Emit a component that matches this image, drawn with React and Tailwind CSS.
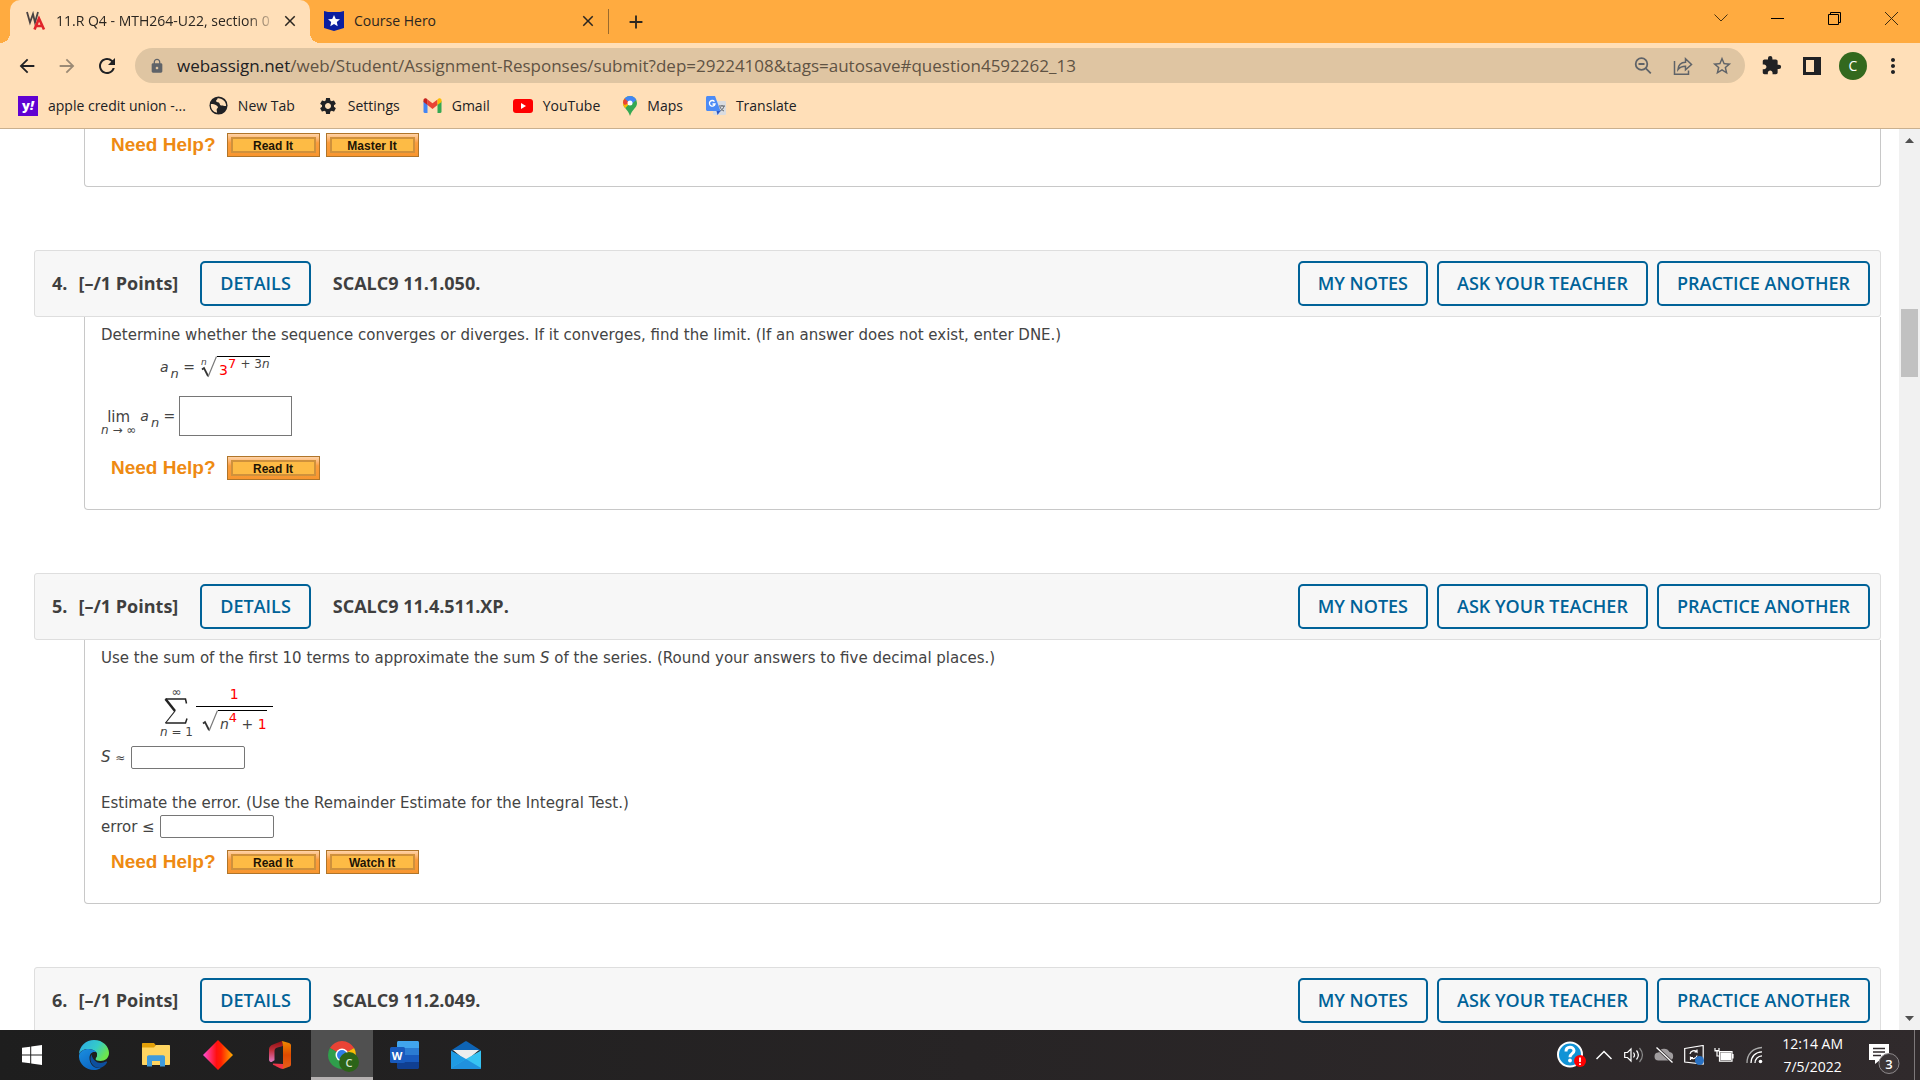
import {
  MdArrowBack,
  MdArrowForward,
  MdClose,
  MdExtension,
  MdLock,
  MdMoreVert,
  MdAdd,
  MdRefresh,
  MdSettings,
  MdStarBorder,
} from "react-icons/md";

const uiFont = "font-['Open_Sans','Noto_Sans',sans-serif]";
const mathFont = "font-['DejaVu_Sans',Verdana,sans-serif]";
const outlineBtnCls =
  "h-[45px] rounded-[5px] border-2 border-[#006298] bg-[#f7f7f7] px-[18px] text-[18px] font-semibold text-[#006298] hover:bg-white";
const answerCls = "h-[23px] w-[114px] rounded-[2px] border border-[#767676] bg-white px-1 focus:outline-none";
const subCls = "bottom-0 ml-0.5 align-[-6px] text-[13px]";
const supCls = "top-0 align-[7px] text-[13px]";

/* ---------- browser chrome ---------- */

function WebAssignIcon() {
  return (
    <svg className="size-5" viewBox="0 0 20 20" fill="none" aria-hidden>
      <path d="M1 1l3 10.500L7 3l2 8.500L12 1" stroke="#4a4242" strokeWidth="1.800" />
      <path d="M8.500 18.500l4.500-11 5 11M10.500 15h6" stroke="#e0252b" strokeWidth="2.600" />
    </svg>
  );
}

function CourseHeroIcon() {
  return (
    <svg className="size-5" viewBox="0 0 20 20" aria-hidden>
      <path d="M0 0l4 1h12l4-1v17l-10 3-10-3z" fill="#0b1fa0" />
      <path d="M10 4l1.800 3.900 4.200.4-3.200 2.800.9 4.200L10 13.100l-3.700 2.200.9-4.200L4 8.300l4.200-.4z" fill="#fff" />
    </svg>
  );
}

function TabStrip() {
  return (
    <div className="flex h-[43px] items-stretch bg-[#ffab40] pl-[10px] text-[14px] text-[#2b2620]">
      <div className="relative flex w-[300px] items-center rounded-t-[10px] bg-[#ffdfb8] pr-[11px] pb-0.5 pl-4">
        <span className="absolute bottom-0 -left-[10px] size-[10px] bg-[radial-gradient(circle_at_0_0,transparent_10px,#ffdfb8_10px)]" />
        <span className="absolute -right-[10px] bottom-0 size-[10px] bg-[radial-gradient(circle_at_100%_0,transparent_10px,#ffdfb8_10px)]" />
        <WebAssignIcon />
        <span className="ml-[10px] grow whitespace-nowrap [mask-image:linear-gradient(to_right,#000_190px,transparent_222px)]">
          11.R Q4 - MTH264-U22, section 0
        </span>
        <button aria-label="Close tab">
          <MdClose className="size-[18px]" />
        </button>
      </div>
      <div className="flex w-[298px] items-center pr-[11px] pb-0.5 pl-[14px]">
        <CourseHeroIcon />
        <span className="ml-[10px] grow">Course Hero</span>
        <button aria-label="Close tab">
          <MdClose className="size-[18px]" />
        </button>
      </div>
      <div className="my-[9px] w-px bg-[#9a6a2c]" />
      <button aria-label="New tab" className="ml-4">
        <MdAdd className="size-[22px]" />
      </button>
      <div className="ml-auto flex">
        <button aria-label="Search tabs" className="grid w-[57px] place-items-center pb-2">
          <svg width="14" height="8" viewBox="0 0 14 8" fill="none" stroke="#4a3413" aria-hidden>
            <path d="M.5.5L7 7l6.500-6.500" />
          </svg>
        </button>
        <button aria-label="Minimize" className="grid w-[57px] place-items-center">
          <svg width="13" height="13" viewBox="0 0 13 13" aria-hidden>
            <path d="M0 3.500h13" stroke="#000" />
          </svg>
        </button>
        <button aria-label="Restore" className="grid w-[57px] place-items-center pb-[6px]">
          <svg width="13" height="13" viewBox="0 0 13 13" fill="none" stroke="#000" aria-hidden>
            <path d="M.5 2.500h10v10H.5zM2.500 2.500v-2h10v10h-2" />
          </svg>
        </button>
        <button aria-label="Close" className="grid w-[57px] place-items-center pb-[6px]">
          <svg width="13" height="13" viewBox="0 0 13 13" stroke="#3a2a10" aria-hidden>
            <path d="M0 0l13 13M13 0L0 13" />
          </svg>
        </button>
      </div>
    </div>
  );
}

function AddressBar() {
  return (
    <div className="flex h-[45px] items-center pr-[15px] pl-4 text-[#202124]">
      <button aria-label="Back">
        <MdArrowBack className="size-[22px]" />
      </button>
      <button aria-label="Forward" className="ml-[18px] text-[#9b8a75]">
        <MdArrowForward className="size-[22px]" />
      </button>
      <button aria-label="Reload" className="ml-[17px]">
        <MdRefresh className="size-6" />
      </button>
      <div className="ml-4 flex h-[35px] grow items-center rounded-full bg-[#dfc5a2] pr-3 pl-[14px] text-[#5f6368]">
        <MdLock className="size-4" />
        <p className="ml-3 grow text-[17px] whitespace-nowrap text-[#5f5344]">
          <span className="text-[#202124]">webassign.net</span>
          /web/Student/Assignment-Responses/submit?dep=29224108&amp;tags=autosave#question4592262_13
        </p>
        <button aria-label="Zoom">
          <svg className="size-[18px]" viewBox="0 0 18 18" fill="none" stroke="currentColor" strokeWidth="1.800" aria-hidden>
            <circle cx="7.500" cy="7" r="5.800" />
            <path d="M4.500 7h6M11.800 11.300l5 5" />
          </svg>
        </button>
        <button aria-label="Share" className="ml-[21px]">
          <svg className="size-5" viewBox="0 0 20 20" fill="none" stroke="currentColor" strokeWidth="1.500" aria-hidden>
            <path d="M1.500 5v13.200h14V14.500" />
            <path d="M5 13.500c.3-4.500 3-7 7.500-7.200V2.800l6 5.700-6 5.300v-3.500c-3.500 0-5.700.7-7.500 3.200z" />
          </svg>
        </button>
        <button aria-label="Bookmark" className="ml-[18px]">
          <MdStarBorder className="size-[22px]" />
        </button>
      </div>
      <button aria-label="Extensions" className="ml-4">
        <MdExtension className="size-[21px]" />
      </button>
      <button aria-label="Side panel" className="ml-[21px]">
        <svg className="size-[18px]" viewBox="0 0 18 18" aria-hidden>
          <path d="M0 0h18v18H0zM3 3v12h8V3z" fill="currentColor" fillRule="evenodd" />
        </svg>
      </button>
      <button aria-label="Profile" className="ml-[18px] grid size-7 place-items-center rounded-full bg-[#33691e] text-[14px] text-white">
        C
      </button>
      <button aria-label="Menu" className="ml-[14px]">
        <MdMoreVert className="size-6" />
      </button>
    </div>
  );
}

function YahooIcon() {
  return (
    <span className="grid size-5 place-items-center bg-[#6001d2] text-[13px] leading-none font-extrabold text-white">
      <span>
        y<i>!</i>
      </span>
    </span>
  );
}

function GlobeIcon() {
  return (
    <svg className="size-[19px]" viewBox="0 0 20 20" aria-hidden>
      <circle cx="10" cy="10" r="9.500" fill="#202124" />
      <path d="M2 8.500c2.500 0 4 .5 6 1.500 1.500.8 2 2.500.5 3.200-1 .8 0 2.500 0 4.500C4 17 1.500 13 2 8.500z" fill="#ffdfb8" />
      <path d="M9 2.300c.2 1.700-2 1.700-1.500 3.200.6 1.500 3 .5 3.500 2 .4 1.300 1 2.500 2.500 2.500 1.800 0 2.200 1 4.500.5.300-4.500-4-8.700-9-8.200z" fill="#ffdfb8" />
    </svg>
  );
}

function GmailIcon() {
  return (
    <svg className="h-[15px] w-[19px]" viewBox="0 0 18 15" aria-hidden>
      <path d="M0 3v10.800C0 14.500.5 15 1.200 15H4V6z" fill="#4285f4" />
      <path d="M18 3v10.800c0 .7-.5 1.200-1.200 1.200H14V6z" fill="#34a853" />
      <path d="M4 1.500v5.600l5 3.900 5-3.900V1.500L9 5.300z" fill="#ea4335" />
      <path d="M0 2.200v1.900l4 3V1.500L3.200.8C1.800-.3 0 .6 0 2.200z" fill="#c5221f" />
      <path d="M18 2.200v1.900l-4 3V1.500l.8-.7C16.200-.3 18 .6 18 2.200z" fill="#fbbc04" />
    </svg>
  );
}

function YouTubeIcon() {
  return (
    <svg className="h-[14px] w-5" viewBox="0 0 20 14" aria-hidden>
      <rect width="20" height="14" rx="3" fill="#f00" />
      <path d="M8 4l5 3-5 3z" fill="#fff" />
    </svg>
  );
}

function MapsIcon() {
  return (
    <svg className="h-5 w-[14px]" viewBox="0 0 14 20" aria-hidden>
      <path d="M0 7a7 7 0 0114 0c0 5-5 6-7 13C5 13 0 12 0 7z" fill="#34a853" />
      <path d="M0 7c0-2 .7-3.400 1.700-4.600L7 7l-4.800 5.200C.9 10.700 0 9.500 0 7z" fill="#fbbc04" />
      <path d="M1.700 2.400L7 7l-5.500 2L0 7c0-2 .7-3.400 1.700-4.600z" fill="#ea4335" />
      <path d="M1.700 2.400A7 7 0 0113.300 4L8 8.500z" fill="#4285f4" />
      <circle cx="7" cy="7" r="2.500" fill="#fff" />
    </svg>
  );
}

function TranslateIcon() {
  return (
    <svg className="size-5" viewBox="0 0 20 20" aria-hidden>
      <rect x="7" y="5" width="13" height="14" rx="1" fill="#dadce0" />
      <path d="M13 10h6M16 9v1M18 10c-.5 2.500-2 4-4 5M14 11c.8 2 2.300 3.300 4 4" stroke="#5f6368" fill="none" />
      <path d="M1.500 0H9l5.500 15H1.500C.7 15 0 14.300 0 13.500v-12C0 .7.7 0 1.500 0z" fill="#4c8bf5" />
      <path d="M10.500 15h4L11.500 19z" fill="#2a56c6" />
      <path d="M8.500 5.600A2.800 2.800 0 109 8H6.500" stroke="#fff" strokeWidth="1.300" fill="none" />
    </svg>
  );
}

const bookmarks = [
  { label: "apple credit union -...", icon: <YahooIcon /> },
  { label: "New Tab", icon: <GlobeIcon /> },
  { label: "Settings", icon: <MdSettings className="size-5 text-[#202124]" /> },
  { label: "Gmail", icon: <GmailIcon /> },
  { label: "YouTube", icon: <YouTubeIcon /> },
  { label: "Maps", icon: <MapsIcon /> },
  { label: "Translate", icon: <TranslateIcon /> },
];

function BookmarksBar() {
  return (
    <nav className="flex h-10 items-center gap-[23px] pb-[5px] pl-[18px] text-[14px] text-[#202124]">
      {bookmarks.map((b) => (
        <a key={b.label} href="#" className="flex items-center gap-[10px] whitespace-nowrap">
          {b.icon}
          {b.label}
        </a>
      ))}
    </nav>
  );
}

/* ---------- assignment page ---------- */

function HelpRow({ items }) {
  return (
    <div className="flex h-6 items-center gap-1.5 pl-[10px] font-['Liberation_Sans',Arial,sans-serif] font-bold">
      <span className="mr-[5px] text-[19px] text-[#ee8a12]">Need Help?</span>
      {items.map((item) => (
        <button
          key={item}
          className="h-6 w-[93px] border border-[#b0752a] bg-linear-to-b from-[#ffd3a6] via-[#fb9d3c] via-40% to-[#f8962f] p-[3px]"
        >
          <span className="grid h-full place-items-center border-2 border-[#cf913c] bg-[#fdbb45] pt-px text-[12px] leading-none text-[#1d1405]">
            {item}
          </span>
        </button>
      ))}
    </div>
  );
}

function QuestionHeader({ number, code }) {
  return (
    <header className="flex h-[67px] items-center rounded-[3px] border border-[#dedede] bg-[#f7f7f7] pr-[10px] pl-[17px] text-[#3f3f3f]">
      <h2 className="flex gap-[11px] text-[18px] font-bold whitespace-nowrap">
        <span>{number}.</span>
        <span>[–/1 Points]</span>
      </h2>
      <button className={`${outlineBtnCls} ml-[22px]`}>DETAILS</button>
      <strong className="ml-[22px] text-[18px] font-bold whitespace-nowrap">{code}</strong>
      <div className="ml-auto flex gap-[9px] whitespace-nowrap">
        <button className={outlineBtnCls}>MY NOTES</button>
        <button className={outlineBtnCls}>ASK YOUR TEACHER</button>
        <button className={outlineBtnCls}>PRACTICE ANOTHER</button>
      </div>
    </header>
  );
}

function QuestionBody({ children }) {
  return (
    <div
      className={`${mathFont} ml-[50px] rounded-b-[4px] border border-t-0 border-[#c8c8c8] px-4 pt-1.5 pb-[29px] text-[15px] leading-6 text-[#444]`}
    >
      {children}
    </div>
  );
}

function Radical({ children }) {
  return (
    <span className="flex items-start">
      <svg className="h-[22px] w-4" viewBox="0 0 16 22" fill="none" aria-hidden>
        <path d="M1 13.500l2-1.500 4 8" stroke="#333" strokeWidth="1.800" />
        <path d="M7 21L15.500.5" stroke="#777" strokeWidth="1.200" />
      </svg>
      <span className="border-t border-black pl-0.5 leading-[26px]">{children}</span>
    </span>
  );
}

function SequenceQuestion() {
  return (
    <section>
      <QuestionHeader number={4} code="SCALC9 11.1.050." />
      <QuestionBody>
        <p>
          Determine whether the sequence converges or diverges. If it converges, find the limit. (If an answer does not
          exist, enter DNE.)
        </p>
        <div className="flex h-10 items-center pl-[59px] text-[14px]">
          <span>
            <i>a</i>
            <sub className={subCls}>
              <i>n</i>
            </sub>{" "}
            =
          </span>
          <span className="relative mt-1 ml-1.5 flex">
            <i className="absolute top-0 left-0 text-[9px] leading-3">n</i>
            <Radical>
              <span className="text-[#f00]">3</span>
              <sup className={supCls}>
                <span className="text-[#f00]">7</span>{" "}
                <span className="text-[12px]">
                  + 3<i>n</i>
                </span>
              </sup>
            </Radical>
          </span>
        </div>
        <label className="mt-[9px] flex items-center">
          <span className="flex flex-col items-center pt-3.5 leading-[14px]">
            <span>lim</span>
            <span className="text-[12px] leading-3">
              <i>n</i> → ∞
            </span>
          </span>
          <span className="ml-1 text-[14px]">
            <i>a</i>
            <sub className={subCls}>
              <i>n</i>
            </sub>{" "}
            =
          </span>
          <input type="text" className="ml-1 h-10 w-[113px] border border-[#767676] bg-white px-1 focus:outline-none" />
        </label>
        <div className="mt-5">
          <HelpRow items={["Read It"]} />
        </div>
      </QuestionBody>
    </section>
  );
}

function SeriesQuestion() {
  return (
    <section>
      <QuestionHeader number={5} code="SCALC9 11.4.511.XP." />
      <QuestionBody>
        <p>
          Use the sum of the first 10 terms to approximate the sum <i>S</i> of the series. (Round your answers to five
          decimal places.)
        </p>
        <div className="flex h-[70px] items-center gap-[3px] pl-[59px]">
          <span className="mt-4 flex flex-col items-center text-[12px]">
            <span className="leading-3">∞</span>
            <svg className="h-[26px] w-6" viewBox="0 0 24 26" fill="none" stroke="#222" aria-hidden>
              <path d="M22.500 5.500L21.500 1H1.500M1.500 25h20l1.500-4.500" strokeWidth="1.500" />
              <path d="M1.500 1l9.500 12" strokeWidth="2.500" />
              <path d="M11 13L1.500 25" strokeWidth="1.200" />
            </svg>
            <span className="leading-4">
              <i>n</i> = 1
            </span>
          </span>
          <span className="mt-2 flex flex-col items-center text-[14px]">
            <span className="leading-6 text-[#f00]">1</span>
            <span className="border-t border-black px-1.5 pt-[3px]">
              <Radical>
                <i>n</i>
                <sup className={`${supCls} text-[#f00]`}>4</sup> + <span className="text-[#f00]">1</span>
              </Radical>
            </span>
          </span>
        </div>
        <label className="mt-1.5 flex h-[23px] items-center gap-1.5">
          <span>
            <i>S</i> <span className="text-[12px]">≈</span>
          </span>
          <input type="text" className={answerCls} />
        </label>
        <p className="mt-[22px]">Estimate the error. (Use the Remainder Estimate for the Integral Test.)</p>
        <label className="flex h-[23px] items-center gap-[5px]">
          <span>error ≤</span>
          <input type="text" className={answerCls} />
        </label>
        <div className="mt-3">
          <HelpRow items={["Read It", "Watch It"]} />
        </div>
      </QuestionBody>
    </section>
  );
}

function Scrollbar() {
  return (
    <div className="flex w-[21px] shrink-0 flex-col items-center bg-[#f1f1f1]">
      <svg className="mt-[9px] h-[5px] w-[9px]" viewBox="0 0 9 5" aria-hidden>
        <path d="M0 5l4.500-5L9 5z" fill="#505050" />
      </svg>
      <div className="mt-[166px] h-[68px] w-[17px] bg-[#c1c1c1]" />
      <svg className="mt-auto mb-[9px] h-[5px] w-[9px]" viewBox="0 0 9 5" aria-hidden>
        <path d="M0 0l4.500 5L9 0z" fill="#505050" />
      </svg>
    </div>
  );
}

/* ---------- taskbar ---------- */

function WindowsIcon() {
  return (
    <svg className="size-5" viewBox="0 0 20 20" fill="#fff" aria-hidden>
      <path d="M0 2.800L8.200 1.700v7.800H0zM9.200 1.500L20 0v9.500H9.200zM0 10.500h8.200v7.800L0 17.200zM9.200 10.500H20V20L9.200 18.500z" />
    </svg>
  );
}

function EdgeIcon() {
  return (
    <svg className="size-[30px]" viewBox="0 0 30 30" aria-hidden>
      <defs>
        <linearGradient id="edgeTop" x1="0" y1="0" x2="1" y2="0.500">
          <stop offset="0" stopColor="#2aa8e8" />
          <stop offset="0.600" stopColor="#35cbc8" />
          <stop offset="1" stopColor="#6ce64d" />
        </linearGradient>
        <linearGradient id="edgeBody" x1="0" y1="0" x2="0.700" y2="1">
          <stop offset="0" stopColor="#1b8fe0" />
          <stop offset="1" stopColor="#0a63c0" />
        </linearGradient>
      </defs>
      <path d="M0 14C.5 6 7 0 15 0c9 0 15 6.500 15 13 0 5-4 8-8.500 8-3 0-5-1-5-2 0-1 1.500-1.500 1.500-4 0-3.500-4-6-8.500-6C5 9 1.500 11 0 14z" fill="url(#edgeTop)" />
      <path d="M0 15.500C.5 11.500 5 9 9.500 9c3.500 0 6.500 1.500 8 3.500-4-1.500-7 1-7 5.500 0 6 5 12 12 9.500C20 29.500 17.500 30 15 30 6.500 30-.5 23.500 0 15.500z" fill="url(#edgeBody)" />
      <path d="M12.500 14.500c-3 5 0 13 8 13.500 3.500-.5 6-2.800 7.500-5.500.3-.8-.3-1.300-1-.9-6 3-12.500 1-14.500-7.100z" fill="#0d4f9e" />
      <path d="M12.800 14c1.500-2 3.500-2 4.700-1.500.7 1 .8 2.500 0 4-.8 1.300-1.500 2-.8 3-2.400-1-3.700-3-3.900-5.500z" fill="#1e1e1e" />
    </svg>
  );
}

function FolderIcon() {
  return (
    <svg className="h-6 w-7" viewBox="0 0 28 24" aria-hidden>
      <path d="M0 1c0-.6.400-1 1-1h11l2 2.500V6H0z" fill="#e3a008" />
      <path d="M0 4.500h12L14 2h13c.6 0 1 .4 1 1v18c0 .6-.4 1-1 1H1c-.6 0-1-.4-1-1z" fill="#ffd561" />
      <path d="M5 23.500V14c0-1 .8-1.800 1.800-1.800h14.400c1 0 1.800.8 1.800 1.800v9.500h-5V18h-8v5.500z" fill="#3f9bdc" />
    </svg>
  );
}

function DiamondIcon() {
  return (
    <svg className="size-[30px]" viewBox="0 0 30 30" aria-hidden>
      <defs>
        <linearGradient id="diamond">
          <stop offset="0" stopColor="#ff4fd8" />
          <stop offset="0.450" stopColor="#ff1010" />
          <stop offset="0.600" stopColor="#ff2000" />
          <stop offset="1" stopColor="#ffae00" />
        </linearGradient>
      </defs>
      <path d="M15 0l15 15-15 15L0 15z" fill="url(#diamond)" />
    </svg>
  );
}

function OfficeIcon() {
  return (
    <svg className="h-7 w-6" viewBox="0 0 24 28" aria-hidden>
      <defs>
        <linearGradient id="officeLeft" x1="0" y1="0" x2="0" y2="1">
          <stop offset="0" stopColor="#8e0f12" />
          <stop offset="0.450" stopColor="#c0303c" />
          <stop offset="1" stopColor="#e07ac4" />
        </linearGradient>
        <linearGradient id="officeRight" x1="0" y1="0" x2="0" y2="1">
          <stop offset="0" stopColor="#f08a00" />
          <stop offset="0.500" stopColor="#e04a00" />
          <stop offset="1" stopColor="#e8601c" />
        </linearGradient>
      </defs>
      <path d="M14 0L5 3.500C2.500 4.500 1 6 1 8.500v10c0 2 1.500 3 3 2.200l2.500-1.500V10c0-2 1-3 3-3.500L15 5z" fill="url(#officeLeft)" />
      <path d="M14 0l7 2c1.300.4 2 1.300 2 2.600v18.600c0 1.300-.7 2.200-2 2.600l-6 2.200V5z" fill="url(#officeRight)" />
      <path d="M5 22.500l10 .5v5c-1 0-2-.2-3-.7l-6-3c-1-.5-1.500-1-1-1.800z" fill="#f0364a" />
    </svg>
  );
}

function ChromeIcon() {
  return (
    <span className="relative">
      <svg className="size-7" viewBox="0 0 28 28" aria-hidden>
        <path d="M14 14L1.900 7A14 14 0 0126.100 7z" fill="#ea4335" />
        <path d="M14 14L26.100 7A14 14 0 0114 28z" fill="#fbbc04" />
        <path d="M14 14v14A14 14 0 011.900 7z" fill="#2f9e4b" />
        <circle cx="14" cy="14" r="6.500" fill="#fff" />
        <circle cx="14" cy="14" r="5" fill="#2f7de9" />
      </svg>
      <span className="absolute -right-[3px] -bottom-[3px] grid size-5 place-items-center rounded-full bg-[#2c6418] text-[11px] leading-none font-semibold text-[#d7e3d2]">
        C
      </span>
    </span>
  );
}

function WordIcon() {
  return (
    <span className="relative">
      <svg className="h-7 w-[29px]" viewBox="0 0 29 28" aria-hidden>
        <path d="M7 1.500C7 .6 7.600 0 8.500 0h19c.9 0 1.500.6 1.500 1.500V7H7z" fill="#41a5ee" />
        <path d="M7 7h22v7H7z" fill="#2b7cd3" />
        <path d="M7 14h22v7H7z" fill="#185abd" />
        <path d="M7 21h22v5.500c0 .9-.6 1.500-1.500 1.500h-19c-.9 0-1.500-.6-1.500-1.500z" fill="#103f91" />
        <rect y="6" width="15" height="16" rx="1.500" fill="#185abd" />
      </svg>
      <span className="absolute top-1.5 left-0 grid h-4 w-[15px] place-items-center text-[11px] leading-none font-bold text-white">
        W
      </span>
    </span>
  );
}

function MailIcon() {
  return (
    <svg className="h-7 w-[30px]" viewBox="0 0 30 28" aria-hidden>
      <path d="M0 9.500L14 .5c.6-.4 1.400-.4 2 0l14 9z" fill="#0e64b5" />
      <path d="M2 9h26L15 20z" fill="#eee" />
      <path d="M0 9.500L15 18v10H1.500C.7 28 0 27.300 0 26.500z" fill="#1f9be4" />
      <path d="M30 9.500L15 18 0 27c.2.600.8 1 1.500 1h27c.8 0 1.500-.7 1.500-1.500z" fill="#37c3f2" />
      <path d="M15 18L0 27c.2.600.8 1 1.500 1h28c.3 0 .5-.5.500-1z" fill="#2091dd" />
    </svg>
  );
}

const apps = [
  { label: "Start", icon: <WindowsIcon /> },
  { label: "Microsoft Edge", icon: <EdgeIcon /> },
  { label: "File Explorer", icon: <FolderIcon /> },
  { label: "Diamond", icon: <DiamondIcon /> },
  { label: "Office", icon: <OfficeIcon /> },
  { label: "Google Chrome", icon: <ChromeIcon />, active: true },
  { label: "Word", icon: <WordIcon /> },
  { label: "Mail", icon: <MailIcon /> },
];

function SystemTray() {
  return (
    <div className="ml-auto flex items-center text-white">
      <svg className="mr-[10px] h-7 w-[29px]" viewBox="0 0 29 28" aria-hidden>
        <circle cx="13" cy="13.500" r="12" fill="#1193d6" stroke="#fff" strokeWidth="2" />
        <path d="M9 10.500c0-5.500 8-5.500 8-.8 0 3-4 3-4 6.500" stroke="#fff" strokeWidth="3" fill="none" />
        <circle cx="13" cy="19.500" r="1.900" fill="#fff" />
        <circle cx="23" cy="20" r="6" fill="#f00" />
        <path d="M23 16.500v4.500M23 22.300v1.700" stroke="#fff" strokeWidth="1.800" />
      </svg>
      <svg className="mr-3 h-[10px] w-4" viewBox="0 0 16 10" fill="none" stroke="#fff" strokeWidth="1.500" aria-hidden>
        <path d="M.5 9L8 1.500 15.500 9" />
      </svg>
      <svg className="mr-[10px] h-[18px] w-5" viewBox="0 0 20 18" fill="none" stroke="#fff" strokeWidth="1.200" aria-hidden>
        <path d="M.7 6.500h2.800L7 3v12l-3.500-3.500H.7z" />
        <path d="M9.500 6.500c1.200 1.500 1.200 3.500 0 5M12.500 4.500c2.300 2.800 2.300 6.200 0 9" />
        <path d="M15.500 2c3.800 4.500 3.800 9.500 0 14" stroke="#888" />
      </svg>
      <svg className="mr-[10px] h-[18px] w-5" viewBox="0 0 20 18" aria-hidden>
        <path d="M4.500 14.500a4 4 0 010-8A6 6 0 0115.500 6a4.300 4.300 0 010 8.500z" fill="#a09c9e" />
        <path d="M2.500 1.500l16 15" stroke="#302a2c" strokeWidth="3" />
        <path d="M2.500 1.500l16 15" stroke="#fff" strokeWidth="1.300" />
      </svg>
      <svg className="mr-[10px] h-5 w-5" viewBox="0 0 20 20" fill="none" stroke="#fff" strokeWidth="1.200" aria-hidden>
        <path d="M.7 3.500l18.500-3v18.500l-18.500-2z" />
        <path d="M6 9c.5-3 4.500-4.500 7-2V4.500M13 7h-2.500M13 10.500c-.5 3-4.500 4-6.500 2V15M6.500 12.500H9" />
        <circle cx="15.500" cy="15.500" r="4.500" fill="#2a72c4" stroke="none" />
      </svg>
      <svg className="mr-3 h-[14px] w-5" viewBox="0 0 20 14" fill="none" stroke="#fff" strokeWidth="1.200" aria-hidden>
        <path d="M5.500 3.600H18v9.500H5.500zM19 6v4.500" />
        <path d="M7 5h9.500v6.500H7z" fill="#fff" />
        <path d="M1 0v3h4V0M3 3v5h3M.5 2.500h5" />
      </svg>
      <svg className="mr-[18px] size-[18px]" viewBox="0 0 18 18" fill="none" stroke="#fff" strokeWidth="1.300" aria-hidden>
        <path d="M1 17C1 8 7 2 16 1.500" stroke="#aaa" />
        <path d="M5 17c0-6.500 4.500-11 11-11.200M9 17c0-4 3-7 7-7.200" />
        <circle cx="14.500" cy="15.500" r="1.800" fill="#fff" stroke="none" />
      </svg>
      <div className="text-center text-[14px] leading-[23px] whitespace-nowrap">
        <div>12:14 AM</div>
        <div>7/5/2022</div>
      </div>
      <button aria-label="Notifications" className="relative mt-2 ml-[26px] h-[30px] w-[31px]">
        <svg className="h-[30px] w-[31px]" viewBox="0 0 31 30" aria-hidden>
          <path d="M0 0h20v16h-9l-5 4v-4H0z" fill="#fff" />
          <path d="M4 4.500h12M4 8h12M4 11.500h8" stroke="#302a2c" strokeWidth="1.300" />
          <circle cx="20" cy="19.500" r="10" fill="#3c3638" stroke="#8d898b" />
        </svg>
        <span className="absolute top-[10px] left-[10px] grid size-5 place-items-center text-[13px] leading-none font-semibold">
          3
        </span>
      </button>
      <span className="ml-3.5 h-[50px] w-px bg-[#7d787a]" />
      <span className="w-[5px]" />
    </div>
  );
}

function Taskbar() {
  return (
    <footer className="flex h-[50px] shrink-0 bg-linear-to-r from-[#1e1e1e] to-[#302a2c] pl-px">
      {apps.map((app) => (
        <button
          key={app.label}
          aria-label={app.label}
          className={`grid w-[62px] place-items-center ${
            app.active ? "border-b-[3px] border-[#b5b1b1] bg-[#505050] pt-[3px]" : ""
          }`}
        >
          {app.icon}
        </button>
      ))}
      <SystemTray />
    </footer>
  );
}

export default function App() {
  return (
    <div className={`${uiFont} flex h-screen flex-col overflow-hidden bg-white`}>
      <div className="shrink-0 border-b border-[#c9b08f] bg-[#ffdfb8]">
        <TabStrip />
        <AddressBar />
        <BookmarksBar />
      </div>
      <div className="flex min-h-0 grow">
        <main className="flex grow flex-col gap-[63px] overflow-hidden pr-[18px] pl-[34px]">
          <div className="ml-[50px] rounded-b-[4px] border border-t-0 border-[#c8c8c8] px-4 pt-1 pb-[29px]">
            <HelpRow items={["Read It", "Master It"]} />
          </div>
          <SequenceQuestion />
          <SeriesQuestion />
          <section>
            <QuestionHeader number={6} code="SCALC9 11.2.049." />
          </section>
        </main>
        <Scrollbar />
      </div>
      <Taskbar />
    </div>
  );
}
